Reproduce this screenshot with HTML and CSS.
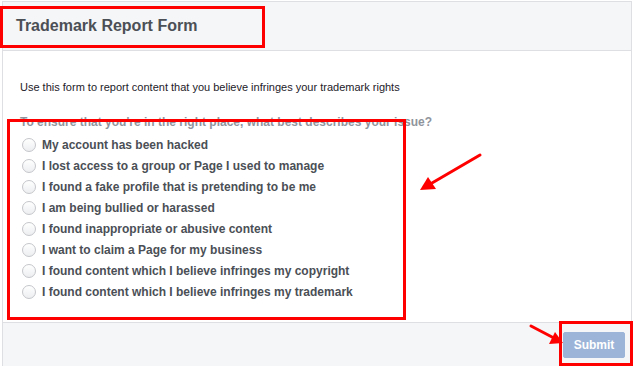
FILE: index.html
```html
<!DOCTYPE html>
<html>
<head>
<meta charset="utf-8">
<link rel="stylesheet" href="styles.css">
</head>
<body>
<div class="panel">
  <div class="panel-header">
    <h1 class="title">Trademark Report Form</h1>
  </div>
  <div class="panel-body">
    <p class="intro">Use this form to report content that you believe infringes your trademark rights</p>
    <p class="question">To ensure that you're in the right place, what best describes your issue?</p>
    <ul class="options">
      <li class="option"><span class="radio"></span><span class="label">My account has been hacked</span></li>
      <li class="option"><span class="radio"></span><span class="label">I lost access to a group or Page I used to manage</span></li>
      <li class="option"><span class="radio"></span><span class="label">I found a fake profile that is pretending to be me</span></li>
      <li class="option"><span class="radio"></span><span class="label">I am being bullied or harassed</span></li>
      <li class="option"><span class="radio"></span><span class="label">I found inappropriate or abusive content</span></li>
      <li class="option"><span class="radio"></span><span class="label">I want to claim a Page for my business</span></li>
      <li class="option"><span class="radio"></span><span class="label">I found content which I believe infringes my copyright</span></li>
      <li class="option"><span class="radio"></span><span class="label">I found content which I believe infringes my trademark</span></li>
    </ul>
  </div>
  <div class="panel-footer">
    <button class="submit" type="button">Submit</button>
  </div>
</div>

<div class="mark mark-title"></div>
<div class="mark mark-options"></div>
<div class="mark mark-submit"></div>
<svg class="arrows" width="637" height="366" viewBox="0 0 637 366">
  <line x1="480" y1="155" x2="432" y2="183" stroke="#f00" stroke-width="3" stroke-linecap="round"/>
  <polygon points="420,190 428,177 436,189" fill="#f00"/>
  <line x1="531" y1="326" x2="552" y2="337" stroke="#f00" stroke-width="3" stroke-linecap="round"/>
  <polygon points="563,343 549,344 555,332" fill="#f00"/>
</svg>
</body>
</html>
```
FILE: styles.css
```css
html, body {
  margin: 0;
  padding: 0;
  background: #fff;
  font-family: "Liberation Sans", Arial, sans-serif;
  overflow: hidden;
}
body {
  width: 637px;
  height: 366px;
  position: relative;
}
.panel {
  margin: 1px 0 0 2px;
  width: 630px;
  border: 1px solid #dddfe2;
  border-bottom: none;
  height: 365px;
  display: flex;
  flex-direction: column;
  box-sizing: border-box;
}
.panel-header {
  height: 48px;
  background: #f5f6f7;
  border-bottom: 1px solid #dddfe2;
  display: flex;
  align-items: center;
  padding-left: 13px;
}
.title {
  margin: 0;
  font-size: 16px;
  font-weight: bold;
  color: #4b4f56;
}
.panel-body {
  height: 271px;
  padding: 0 17px;
  box-sizing: border-box;
}
.intro {
  margin: 28px 0 0;
  font-size: 11px;
  line-height: 16px;
  color: #1d2129;
}
.question {
  margin: 19px 0 0;
  font-size: 12px;
  line-height: 16px;
  font-weight: bold;
  color: #90949c;
}
.options {
  list-style: none;
  margin: 4px 0 0;
  padding: 0;
}
.option {
  display: flex;
  align-items: center;
  height: 21px;
}
.radio {
  width: 12px;
  height: 12px;
  border-radius: 50%;
  border: 1px solid #c4c6ca;
  background: linear-gradient(#fff, #eceef0);
  margin: 0 6px 0 2px;
  flex: none;
}
.label {
  font-size: 12px;
  font-weight: bold;
  color: #4b4f56;
}
.panel-footer {
  flex: 1;
  background: #f5f6f7;
  border-top: 1px solid #dddfe2;
  display: flex;
  justify-content: flex-end;
  align-items: flex-start;
  padding: 9px 6px 0 0;
}
.submit {
  width: 62px;
  height: 26px;
  border: 1px solid #9cb4d8;
  border-radius: 2px;
  background: #9cb4d8;
  color: #fff;
  font-family: "Liberation Sans", Arial, sans-serif;
  font-size: 12px;
  font-weight: bold;
  padding: 0;
}
.mark {
  position: absolute;
  border: 3px solid #f00;
  box-sizing: border-box;
}
.mark-title {
  left: 0;
  top: 6px;
  width: 265px;
  height: 42px;
}
.mark-options {
  left: 7px;
  top: 119px;
  width: 399px;
  height: 201px;
}
.mark-submit {
  left: 559px;
  top: 321px;
  width: 74px;
  height: 45px;
}
.arrows {
  position: absolute;
  left: 0;
  top: 0;
}
```
